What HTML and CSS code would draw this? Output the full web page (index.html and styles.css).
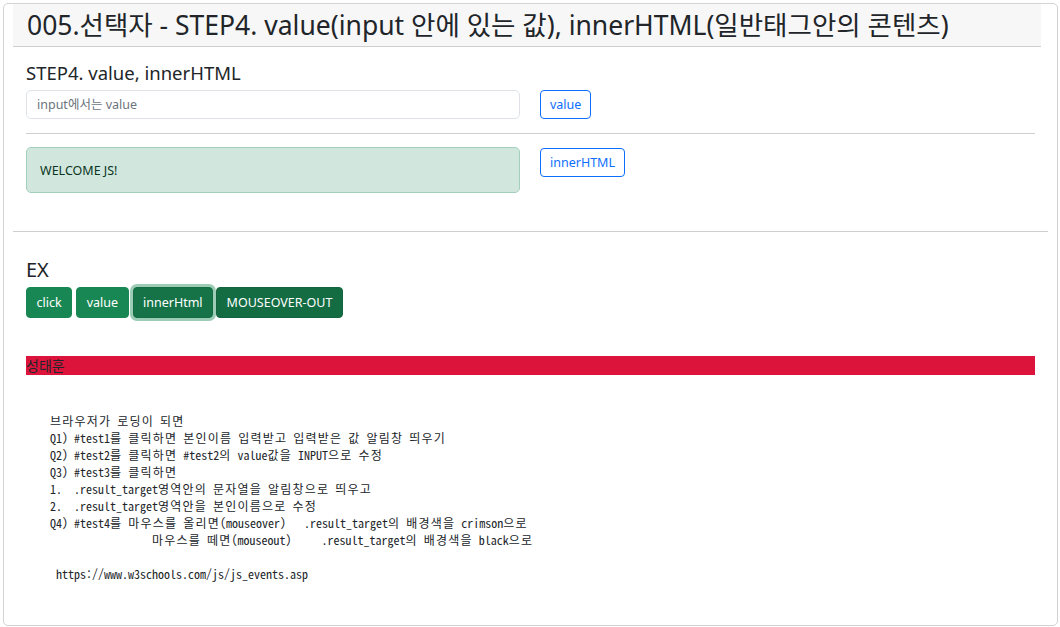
FILE: index.html
```html
<!DOCTYPE html>
<html lang="ko">
<head>
<meta charset="utf-8">
<link rel="stylesheet" href="styles.css">
</head>
<body>
<div class="card">
  <div class="card-header">
    <h3 class="title">005.선택자 - STEP4. value(input 안에 있는 값), innerHTML(일반태그안의 콘텐츠)</h3>
  </div>
  <div class="section">
    <h5 class="sub">STEP4. value, innerHTML</h5>
    <div class="row">
      <input class="field" type="text" placeholder="input에서는 value">
      <button class="btn-outline">value</button>
    </div>
    <hr class="divider">
    <div class="row">
      <div class="alert">WELCOME JS!</div>
      <button class="btn-outline">innerHTML</button>
    </div>
  </div>
  <hr class="divider-wide">
  <div class="section ex">
    <h4 class="ex-title">EX</h4>
    <div class="btns">
      <button class="btn-success">click</button>
      <button class="btn-success">value</button>
      <button class="btn-success focus">innerHtml</button>
      <button class="btn-success dark">MOUSEOVER-OUT</button>
    </div>
    <div class="result">성태훈</div>
<pre class="notes">
    <span class="k">브라우저가</span> <span class="k">로딩이</span> <span class="k">되면</span>
    Q1) #test1<span class="k">를</span> <span class="k">클릭하면</span> <span class="k">본인이름</span> <span class="k">입력받고</span> <span class="k">입력받은</span> <span class="k">값</span> <span class="k">알림창</span> <span class="k">띄우기</span>
    Q2) #test2<span class="k">를</span> <span class="k">클릭하면</span> #test2<span class="k">의</span> value<span class="k">값을</span> INPUT<span class="k">으로</span> <span class="k">수정</span>
    Q3) #test3<span class="k">를</span> <span class="k">클릭하면</span>
    1.  .result_target<span class="k">영역안의</span> <span class="k">문자열을</span> <span class="k">알림창으로</span> <span class="k">띄우고</span>
    2.  .result_target<span class="k">영역안을</span> <span class="k">본인이름으로</span> <span class="k">수정</span>
    Q4) #test4<span class="k">를</span> <span class="k">마우스를</span> <span class="k">올리면</span>(mouseover)   .result_target<span class="k">의</span> <span class="k">배경색을</span> crimson<span class="k">으로</span>
                     <span class="k">마우스를</span> <span class="k">떼면</span>(mouseout)     .result_target<span class="k">의</span> <span class="k">배경색을</span> black<span class="k">으로</span>

     https://www.w3schools.com/js/js_events.asp
</pre>
  </div>
</div>
</body>
</html>
```
FILE: styles.css
```css
* { box-sizing: border-box; }
html, body { margin: 0; padding: 0; background: #fff; }
body {
  padding: 3px;
  font-family: "Noto Sans", "Noto Sans CJK KR", sans-serif;
  color: #212529;
  font-size: 14px;
}
.card {
  width: 1055px;
  height: 623px;
  border: 1px solid #d3d3d3;
  border-radius: 5px;
  padding: 0 9px;
  overflow: hidden;
}
.card-header {
  background: #f7f7f7;
  border-bottom: 1px solid #cfcfcf;
  margin-right: 7px;
  height: 43px;
  padding-left: 14px;
  display: flex;
  align-items: center;
}
.title {
  margin: 0;
  font-weight: 400;
  font-size: 26.5px;
  line-height: 1;
  color: #212529;
  white-space: nowrap;
}
.section { padding: 0 13px; }
.sub {
  margin: 15px 0 6px;
  font-size: 18.5px;
  font-weight: 400;
  line-height: 22px;
}
.row { display: flex; align-items: flex-start; gap: 20px; }
.field {
  width: 494px;
  height: 29px;
  border: 1px solid #dee2e6;
  border-radius: 5px;
  padding: 0 10px;
  font-family: inherit;
  font-size: 12.5px;
  color: #212529;
}
.field::placeholder { color: #6c757d; }
.btn-outline {
  height: 29px;
  padding: 0 9px;
  border: 1px solid #0d6efd;
  border-radius: 4px;
  background: #fff;
  color: #0d6efd;
  font-family: inherit;
  font-size: 12.5px;
}
.divider {
  border: 0;
  border-top: 1px solid #cfcfcf;
  margin: 14px 0 13px;
}
.alert {
  width: 494px;
  height: 46px;
  background: #d1e7dd;
  border: 1px solid #a3cfbb;
  border-radius: 5px;
  color: #0a3622;
  font-size: 12.5px;
  padding: 0 13px;
  display: flex;
  align-items: center;
}
.alert + .btn-outline { margin-top: 1px; }
.divider-wide {
  border: 0;
  border-top: 1px solid #cfcfcf;
  margin: 38px 0 0;
}
.ex-title {
  margin: 26px 0 5px;
  font-size: 20px;
  font-weight: 400;
  line-height: 24px;
}
.btns { display: flex; gap: 4px; }
.btn-success {
  height: 31px;
  padding: 0 9.5px;
  border: 1px solid #198754;
  border-radius: 4px;
  background: #198754;
  color: #fff;
  font-family: inherit;
  font-size: 12.5px;
}
.btn-success.focus {
  background: #157347;
  border-color: #146c43;
  box-shadow: 0 0 0 3px rgba(60, 153, 110, 0.5);
}
.btn-success.dark { background: #146c43; border-color: #13653f; margin-left: -1px; }
.result {
  margin-top: 38px;
  background: #dc143c;
  height: 19px;
  line-height: 19px;
  font-size: 14px;
  color: #212529;
}
.notes {
  margin: 37px 0 0;
  font-family: "Noto Sans Mono CJK KR", "Liberation Mono", "Noto Sans CJK KR", monospace;
  font-size: 12px;
  line-height: 17px;
  color: #212529;
}
.notes .k { letter-spacing: 1.2px; }
```
